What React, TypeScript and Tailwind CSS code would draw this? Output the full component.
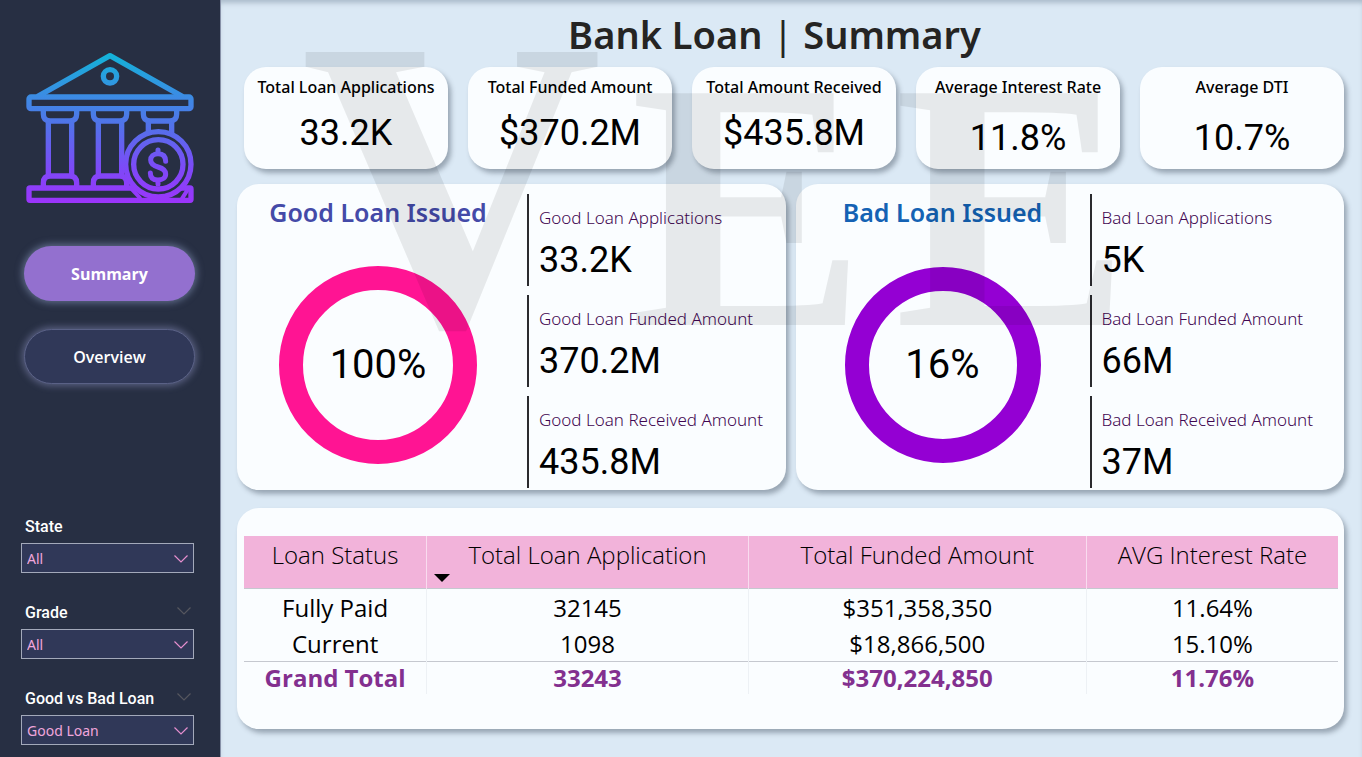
import React from "react";

type Kpi = { title: string; value: string; spaced?: boolean };
type Stat = { label: string; value: string };

const kpis: Kpi[] = [
  { title: "Total Loan Applications", value: "33.2K" },
  { title: "Total Funded Amount", value: "$370.2M" },
  { title: "Total Amount Received", value: "$435.8M" },
  { title: "Average Interest Rate", value: "11.8%", spaced: true },
  { title: "Average DTI", value: "10.7%", spaced: true },
];

const goodStats: Stat[] = [
  { label: "Good Loan Applications", value: "33.2K" },
  { label: "Good Loan Funded Amount", value: "370.2M" },
  { label: "Good Loan Received Amount", value: "435.8M" },
];

const badStats: Stat[] = [
  { label: "Bad Loan Applications", value: "5K" },
  { label: "Bad Loan Funded Amount", value: "66M" },
  { label: "Bad Loan Received Amount", value: "37M" },
];

const rows = [
  ["Fully Paid", "32145", "$351,358,350", "11.64%"],
  ["Current", "1098", "$18,866,500", "15.10%"],
];

const card = "bg-[#fafdff] shadow-[3px_4px_5px_rgba(70,85,100,0.45)]";

function BankLogo() {
  return (
    <svg viewBox="78 68 504 456" className="w-[168px] h-[152px]" fill="none" aria-hidden="true">
      <defs>
        <linearGradient id="bank" gradientUnits="userSpaceOnUse" x1="0" y1="70" x2="0" y2="522">
          <stop offset="0" stopColor="#12b4d8" />
          <stop offset="0.3" stopColor="#3d8ae4" />
          <stop offset="0.5" stopColor="#5470ea" />
          <stop offset="0.78" stopColor="#7f48f8" />
          <stop offset="1" stopColor="#9c34fb" />
        </linearGradient>
      </defs>
      <g stroke="url(#bank)" strokeWidth="16" strokeLinejoin="round">
        <path d="M112 202 330 79 548 202" />
        <circle cx="330" cy="141" r="20" />
        <rect x="87" y="203" width="486" height="35" rx="6" />
        <path d="M130 242v12q0 21 21 21h58q21 0 21-21v-12M145 275V440M215 275V440M130 472v-11q0-21 21-21h58q21 0 21 21v11" />
        <path d="M280 242v12q0 21 21 21h58q21 0 21-21v-12M295 275V440M365 275V440M280 472v-11q0-21 21-21h58q21 0 21 21v11" />
        <path d="M430 242v12q0 21 21 21h58q21 0 21-21v-12M445 275V340M515 275V340" />
        <rect x="87" y="476" width="486" height="37" rx="3" />
      </g>
      <circle cx="475" cy="405" r="98" fill="#272f43" />
      <g stroke="url(#bank)" strokeWidth="16" strokeLinecap="round" strokeLinejoin="round">
        <path d="M565 478 546 508M394 478 420 506" strokeWidth="12" />
        <circle cx="475" cy="405" r="98" />
        <circle cx="475" cy="405" r="74" />
        <path
          strokeWidth="15"
          d="M474 362V372M474 452V464M497 396C497 380 488 373 474 373C460 373 452 382 452 392C452 404 461 409 474 413C488 417 497 422 497 434C497 445 488 452 474 452C460 452 451 446 451 431"
        />
      </g>
    </svg>
  );
}

function Chevron({ className }: { className: string }) {
  return (
    <svg viewBox="0 0 14 8" className={`w-[14px] h-2 ${className}`} fill="none" stroke="currentColor" aria-hidden="true">
      <path d="M0.5 0.5 7 7 13.5 0.5" strokeWidth="1.2" />
    </svg>
  );
}

function Slicer({ id, label, options, menu }: { id: string; label: string; options: string[]; menu?: boolean }) {
  return (
    <div>
      <div className="flex h-6 items-center justify-between pl-1 pr-[3px]">
        <label htmlFor={id} className="font-['Roboto',sans-serif] text-base font-medium text-white">
          {label}
        </label>
        {menu && (
          <button type="button" aria-label={`${label} options`} className="pb-1 text-[#56575f]">
            <Chevron className="block" />
          </button>
        )}
      </div>
      <div className="relative mt-1">
        <select
          id={id}
          className="block h-[30px] w-full appearance-none border border-[#a3a9ba] bg-[#303858] pl-[5px] pt-[2px] text-sm text-[#f0a6dc] outline-none"
        >
          {options.map((o) => (
            <option key={o}>{o}</option>
          ))}
        </select>
        <Chevron className="pointer-events-none absolute right-[6px] top-3 text-[#e68fcf]" />
      </div>
    </div>
  );
}

function LoanPanel(props: {
  title: string;
  titleClass: string;
  ringClass: string;
  radius: number;
  percent: string;
  stats: Stat[];
  columns: string;
  chartClass?: string;
}) {
  const { title, titleClass, ringClass, radius, percent, stats, columns, chartClass = "" } = props;
  return (
    <section className={`grid h-[306px] rounded-[22px] ${card} ${columns}`}>
      <div className={`flex flex-col items-center pt-2 ${chartClass}`}>
        <h2 className={`text-[25px] leading-10 font-semibold ${titleClass}`}>{title}</h2>
        <div className="relative mt-[34px] flex items-center justify-center">
          <svg viewBox="0 0 198 198" className="size-[198px]" fill="none" aria-hidden="true">
            <circle cx="99" cy="99" r={radius} strokeWidth="24" className={ringClass} />
          </svg>
          <span className="absolute font-['Roboto',sans-serif] text-[40px] leading-none text-black">{percent}</span>
        </div>
      </div>
      <div className="flex flex-col gap-[9px] pt-[10px]">
        {stats.map((s) => (
          <div key={s.label} className="flex h-[92px] flex-col border-l-2 border-[#2a2a2e] pl-[10px] pt-3">
            <span className="text-[17px] leading-6 font-light text-[#3f0650]">{s.label}</span>
            <span className="mt-[10px] font-['Roboto',sans-serif] text-4xl leading-10 text-black">{s.value}</span>
          </div>
        ))}
      </div>
    </section>
  );
}

export default function App() {
  return (
    <div className="flex min-h-screen bg-[#dbe9f5] font-['Noto_Sans',sans-serif]">
      <aside className="flex w-[221px] shrink-0 flex-col border-r border-[#8791a8] bg-[#272f43] pb-3 pl-[21px] pr-[26px]">
        <div className="flex pl-[5px] pt-[52px]">
          <BankLogo />
        </div>
        <nav className="-mr-px mt-[42px] flex flex-col gap-7 pl-[3px] font-['Open_Sans',sans-serif] text-base text-white">
          <button
            type="button"
            className="h-[55px] rounded-full bg-[#9370cf] font-bold shadow-[0_0_7px_2px_rgba(150,165,205,0.5)]"
          >
            Summary
          </button>
          <button
            type="button"
            className="h-[55px] rounded-full border border-[#5a6186] bg-[#303858] font-semibold shadow-[0_0_7px_2px_rgba(150,155,205,0.45)]"
          >
            Overview
          </button>
        </nav>
        <div className="mt-auto flex flex-col gap-7">
          <Slicer id="state" label="State" options={["All"]} />
          <Slicer id="grade" label="Grade" options={["All"]} menu />
          <Slicer id="kind" label="Good vs Bad Loan" options={["Good Loan", "Bad Loan"]} menu />
        </div>
      </aside>

      <main className="relative flex min-w-0 flex-1 flex-col px-4 pr-[18px] shadow-[inset_0_5px_5px_-2px_rgba(100,120,140,0.4)]">
        <h1 className="pr-8 pt-2 text-center text-[38px] leading-[52px] font-semibold text-[#252423]">
          Bank Loan <span className="font-normal">|</span> Summary
        </h1>

        <div className="mt-[7px] grid grid-cols-5 gap-5 pl-[7px]">
          {kpis.map((k) => (
            <section
              key={k.title}
              className={`flex h-[102px] flex-col items-center rounded-[22px] pt-2 ${card} ${k.spaced ? "gap-[9px]" : "gap-1"}`}
            >
              <h2 className="text-base leading-6 font-medium whitespace-nowrap text-black">{k.title}</h2>
              <p className="font-['Roboto',sans-serif] text-4xl leading-[60px] text-black">{k.value}</p>
            </section>
          ))}
        </div>

        <div className="mt-[15px] grid grid-cols-2 gap-[10px]">
          <LoanPanel
            title="Good Loan Issued"
            titleClass="text-[#444aa8]"
            ringClass="stroke-[#ff1493]"
            radius={87}
            percent="100%"
            stats={goodStats}
            columns="grid-cols-[290px_1fr]"
            chartClass="pr-2"
          />
          <LoanPanel
            title="Bad Loan Issued"
            titleClass="text-[#1462b4]"
            ringClass="stroke-[#9400d3]"
            radius={86}
            percent="16%"
            stats={badStats}
            columns="grid-cols-[294px_1fr]"
          />
        </div>

        <section className={`mt-[18px] h-[221px] rounded-[22px] pl-[7px] pr-[6px] pt-7 ${card}`}>
          <table className="w-full table-fixed border-collapse text-center font-['Open_Sans',sans-serif] text-[24px] text-black">
            <colgroup>
              <col className="w-[16.7%]" />
              <col className="w-[29.4%]" />
              <col className="w-[30.9%]" />
              <col className="w-[23%]" />
            </colgroup>
            <thead>
              <tr className="h-[52px] border-b border-[#c5c8cf] bg-[#f2b3da] [&>th]:border-r [&>th]:border-[#f9dcef] [&>th]:pt-[3px] [&>th]:align-top [&>th]:font-light [&>th]:leading-8 [&>th:last-child]:border-r-0">
                <th>Loan Status</th>
                <th className="relative">
                  Total Loan Application
                  <svg viewBox="0 0 16 8" className="absolute bottom-[6px] left-[7px] h-2 w-4" aria-hidden="true">
                    <path d="M0 0H16L8 8Z" fill="#000" />
                  </svg>
                </th>
                <th>Total Funded Amount</th>
                <th>AVG Interest Rate</th>
              </tr>
            </thead>
            <tbody>
              {rows.map((r) => (
                <tr key={r[0]} className="h-[36px] [&>td]:border-r [&>td]:border-[#edf1f5] [&>td]:pt-[2px] [&>td]:leading-[34px] [&>td:last-child]:border-r-0">
                  {r.map((c) => (
                    <td key={c}>{c}</td>
                  ))}
                </tr>
              ))}
            </tbody>
            <tfoot>
              <tr className="h-[32px] border-t border-[#c5c8cf] font-bold text-[#83308f] [&>td]:border-r [&>td]:border-[#edf1f5] [&>td]:leading-[32px] [&>td:last-child]:border-r-0">
                <td>Grand Total</td>
                <td>33243</td>
                <td>$370,224,850</td>
                <td>11.76%</td>
              </tr>
            </tfoot>
          </table>
        </section>

        <div
          aria-hidden="true"
          className="pointer-events-none absolute left-[80px] top-[46px] flex h-[276px] items-baseline gap-7 overflow-visible font-['Liberation_Serif',serif] text-[354px] leading-[276px] font-bold text-black/8 select-none"
        >
          <span className="text-[417px]">V</span>
          <span>E</span>
          <span>E</span>
        </div>
      </main>
    </div>
  );
}
